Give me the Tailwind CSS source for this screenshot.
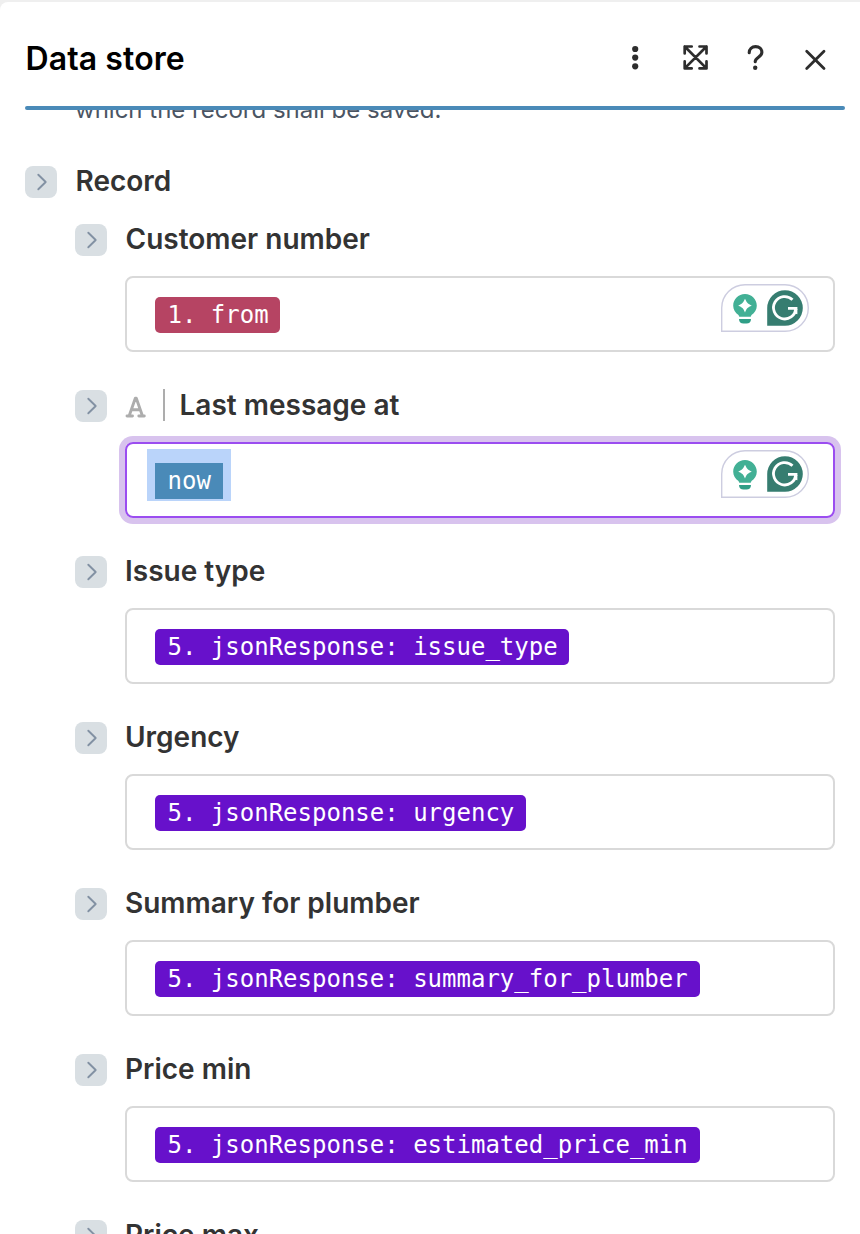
<!DOCTYPE html>
<html lang="en">
<head>
    <meta charset="UTF-8">
    <meta name="viewport" content="width=device-width, initial-scale=1.0">
    <title>Data store</title>
    <script src="https://cdn.jsdelivr.net/npm/@tailwindcss/browser@4"></script>
</head>
<body class="bg-[#efefef] h-screen overflow-hidden">
    <!-- Shared icons -->
    <svg class="hidden">
        <symbol id="chevron" viewBox="0 0 32 32">
            <path d="M13.300 8.700l7.400 7.300-7.400 7.300" fill="none" stroke="#8291a3" stroke-width="1.900" stroke-linecap="round" stroke-linejoin="round"/>
        </symbol>
        <symbol id="assistant" viewBox="0 0 88 48">
            <path d="M.7 47.3V24A23.3 23.3 0 0 1 24 .7h40a23.3 23.3 0 0 1 0 46.6z" fill="#fff" stroke="#cdcde0" stroke-width="1.4"/>
            <path d="M24 10c-6.700 0-11.800 5.200-11.800 11.700 0 4 2.100 7 5.300 9.300l.8 1.800h11.400l.8-1.800c3.200-2.300 5.300-5.300 5.300-9.300C35.800 15.200 30.700 10 24 10z" fill="#42b095"/>
            <path d="M18 35h12c0 3-1.800 4.600-4.500 4.600h-3C19.800 39.600 18 38 18 35z" fill="#2f9f87"/>
            <path d="M24 14.800c1.800 4 2.800 5 6.800 6.800-4 1.800-5 2.800-6.800 6.800-1.800-4-2.800-5-6.800-6.800 4-1.800 5-2.800 6.800-6.800z" fill="#fff"/>
            <path d="M64 6.200a17.800 17.800 0 1 1 0 35.600H46.200V24A17.800 17.800 0 0 1 64 6.200z" fill="#367d70"/>
            <path d="M71.500 15.700A11.200 11.200 0 1 0 74.900 24.400M67 24.400h9.400" fill="none" stroke="#fff" stroke-width="2.800"/>
            <path d="M73 25h3.400v5.200l-3.600-1z" fill="#fff"/>
        </symbol>
    </svg>

    <div class="mt-0.5 h-full bg-white rounded-tl-lg font-['Inter',sans-serif] text-[#333]">
        <!-- Header -->
        <div class="h-[104px] pl-[25.5px] pr-[29px] flex items-start justify-between">
            <h1 class="mt-[37px] text-[32px] leading-10 font-semibold tracking-[0.1px] text-black">Data store</h1>
            <div class="mt-10 flex gap-7 text-[#2d2d2d]">
                <svg class="size-8" viewBox="0 0 32 32" fill="currentColor">
                    <circle cx="16.200" cy="7" r="3.100"/><circle cx="16.200" cy="15.600" r="3.100"/><circle cx="16.200" cy="24.300" r="3.100"/>
                </svg>
                <svg class="size-8" viewBox="0 0 32 32" fill="none" stroke="currentColor" stroke-width="2.700" stroke-linecap="round" stroke-linejoin="round">
                    <path d="M5.700 4.500l21.800 21.900M27.500 4.500L5.700 26.400M5.700 11.500V4.500h7M20.500 4.500h7v7M5.700 19.400v7h7M20.500 26.400h7v-7"/>
                </svg>
                <svg class="size-8" viewBox="0 0 32 32" fill="none" stroke="currentColor" stroke-width="3.100" stroke-linecap="round">
                    <path d="M10.200 10.700c0-3.600 2.700-6.100 6.400-6.100s6.300 2.300 6.300 5.600c0 4.900-6.700 5-6.700 9.500"/>
                    <circle cx="16.200" cy="25.700" r="2.200" fill="currentColor" stroke="none"/>
                </svg>
                <svg class="size-8" viewBox="0 0 32 32" fill="none" stroke="currentColor" stroke-width="2.800" stroke-linecap="round">
                    <path d="M7.700 9.200l17.300 17.400M25 9.200L7.700 26.600"/>
                </svg>
            </div>
        </div>
        <div class="ml-[25px] mr-[15px] h-1 rounded-full bg-[#4a8ab8]"></div>

        <!-- Scrolled form -->
        <div class="h-[1124px] overflow-hidden pl-[25px] pr-[25px]">
            <p class="-mt-5 pl-[50px] text-2xl leading-10 text-[#4b5563]">which the record shall be saved.</p>
            <div class="mt-9 h-[58px] flex items-start gap-[18.5px]">
                <button class="size-8 rounded-lg bg-[#d9dfe3]"><svg class="size-8"><use href="#chevron"/></svg></button>
                <h2 class="text-[28px] leading-[30px] font-semibold">Record</h2>
            </div>

            <div class="pl-[50px] flex flex-col gap-[38px]">
                <!-- Customer number -->
                <div>
                    <div class="flex gap-[18.5px]">
                        <button class="size-8 rounded-lg bg-[#d9dfe3]"><svg class="size-8"><use href="#chevron"/></svg></button>
                        <label class="text-[28px] leading-[30px] font-semibold">Customer number</label>
                    </div>
                    <div class="mt-5 ml-[50px] h-[76px] rounded-lg border-2 border-[#d9d9d9] pl-7 pr-6 flex items-start justify-between">
                        <span class="mt-[19px] h-9 pl-[12.5px] pr-[11.5px] rounded-[5px] bg-[#b64463] text-white font-['DejaVu_Sans_Mono',monospace] text-2xl leading-9">1. from</span>
                        <svg class="mt-1.5 w-[88px] h-12"><use href="#assistant"/></svg>
                    </div>
                </div>

                <!-- Last message at -->
                <div>
                    <div class="flex">
                        <button class="size-8 rounded-lg bg-[#d9dfe3]"><svg class="size-8"><use href="#chevron"/></svg></button>
                        <svg class="ml-[18px] w-[22px] h-8" viewBox="0 0 22 32" fill="none" stroke="#adadad" stroke-width="2.900" stroke-linecap="round" stroke-linejoin="round">
                            <path d="M4.300 25.500L10.300 8.300h1L17.300 25.500M6.500 19.800h8.500M2 26h5.500M13.800 26h5.500"/>
                        </svg>
                        <span class="-mt-px ml-4 w-0.5 h-8 bg-[#adadad]"></span>
                        <label class="ml-[14.5px] text-[28px] leading-[30px] font-semibold">Last message at</label>
                    </div>
                    <div class="mt-5 ml-[50px] h-[76px] rounded-lg border-2 border-[#9b4df0] ring-6 ring-[#d8c3ee] pl-5 pr-6 flex items-start justify-between">
                        <span class="mt-[5px] h-[52px] px-2 pt-3.5 bg-[#bad4fa]">
                            <span class="block w-17 h-9 pl-[12.5px] bg-[#4a8ab8] text-white font-['DejaVu_Sans_Mono',monospace] text-2xl leading-9">now</span>
                        </span>
                        <svg class="mt-1.5 w-[88px] h-12"><use href="#assistant"/></svg>
                    </div>
                </div>

                <!-- Issue type -->
                <div>
                    <div class="flex gap-[18px]">
                        <button class="size-8 rounded-lg bg-[#d9dfe3]"><svg class="size-8"><use href="#chevron"/></svg></button>
                        <label class="text-[28px] leading-[30px] font-semibold">Issue type</label>
                    </div>
                    <div class="mt-5 ml-[50px] h-[76px] rounded-lg border-2 border-[#d9d9d9] pl-7 flex items-start">
                        <span class="mt-[19px] h-9 pl-[12.5px] pr-[11.5px] rounded-[5px] bg-[#6711cb] text-white font-['DejaVu_Sans_Mono',monospace] text-2xl leading-9">5. jsonResponse: issue_type</span>
                    </div>
                </div>

                <!-- Urgency -->
                <div>
                    <div class="flex gap-[18px]">
                        <button class="size-8 rounded-lg bg-[#d9dfe3]"><svg class="size-8"><use href="#chevron"/></svg></button>
                        <label class="text-[28px] leading-[30px] font-semibold">Urgency</label>
                    </div>
                    <div class="mt-5 ml-[50px] h-[76px] rounded-lg border-2 border-[#d9d9d9] pl-7 flex items-start">
                        <span class="mt-[19px] h-9 pl-[12.5px] pr-3 rounded-[5px] bg-[#6711cb] text-white font-['DejaVu_Sans_Mono',monospace] text-2xl leading-9">5. jsonResponse: urgency</span>
                    </div>
                </div>

                <!-- Summary for plumber -->
                <div>
                    <div class="flex gap-[18px]">
                        <button class="size-8 rounded-lg bg-[#d9dfe3]"><svg class="size-8"><use href="#chevron"/></svg></button>
                        <label class="text-[28px] leading-[30px] font-semibold">Summary for plumber</label>
                    </div>
                    <div class="mt-5 ml-[50px] h-[76px] rounded-lg border-2 border-[#d9d9d9] pl-7 flex items-start">
                        <span class="mt-[19px] h-9 pl-[12.5px] pr-3 rounded-[5px] bg-[#6711cb] text-white font-['DejaVu_Sans_Mono',monospace] text-2xl leading-9">5. jsonResponse: summary_for_plumber</span>
                    </div>
                </div>

                <!-- Price min -->
                <div>
                    <div class="flex gap-[18px]">
                        <button class="size-8 rounded-lg bg-[#d9dfe3]"><svg class="size-8"><use href="#chevron"/></svg></button>
                        <label class="text-[28px] leading-[30px] font-semibold">Price min</label>
                    </div>
                    <div class="mt-5 ml-[50px] h-[76px] rounded-lg border-2 border-[#d9d9d9] pl-7 flex items-start">
                        <span class="mt-[19px] h-9 pl-[12.5px] pr-3 rounded-[5px] bg-[#6711cb] text-white font-['DejaVu_Sans_Mono',monospace] text-2xl leading-9">5. jsonResponse: estimated_price_min</span>
                    </div>
                </div>

                <!-- Price max -->
                <div class="flex gap-[18px]">
                    <button class="size-8 rounded-lg bg-[#d9dfe3]"><svg class="size-8"><use href="#chevron"/></svg></button>
                    <label class="text-[28px] leading-[30px] font-semibold">Price max</label>
                </div>
            </div>
        </div>
    </div>
</body>
</html>
